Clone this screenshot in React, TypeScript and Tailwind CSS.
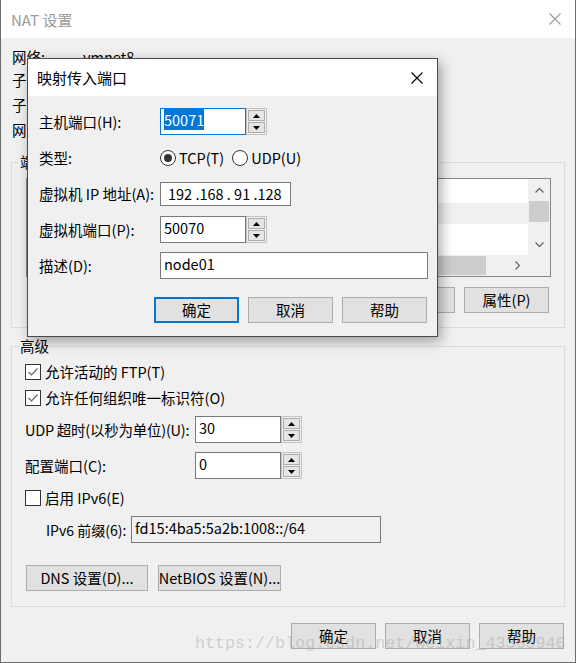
import type { ReactNode } from 'react';

const FONT = "font-['Noto_Sans_CJK_SC','Noto_Sans',sans-serif]";

const CloseIcon = ({ color }: { color: string }) => (
  <svg width="12" height="12" viewBox="0 0 12 12">
    <path d="M0.5 0.5 L11.5 11.5 M11.5 0.5 L0.5 11.5" stroke={color} strokeWidth="1.1" />
  </svg>
);

const Btn = ({ children, primary, w = 'w-[85px]' }: { children: ReactNode; primary?: boolean; w?: string }) => (
  <div
    className={`flex h-[26px] ${w} shrink-0 items-center justify-center bg-[#e1e1e1] text-[14.5px] leading-none text-black ${
      primary ? 'border-2 border-[#0078d7]' : 'border border-[#adadad]'
    }`}
  >
    {children}
  </div>
);

const Tri = ({ down }: { down?: boolean }) => (
  <svg width="7" height="4" viewBox="0 0 7 4">
    <path d={down ? 'M0 0 L7 0 L3.5 4Z' : 'M0 4 L7 4 L3.5 0Z'} fill="#000" />
  </svg>
);

const Spin = () => (
  <div className="flex h-[27px] w-[21px] shrink-0 flex-col gap-[1px] border border-[#c2c2c2] bg-[#f0f0f0] p-[1px]">
    <div className="flex flex-1 items-center justify-center border border-[#adadad] bg-[#e5e5e5]">
      <Tri />
    </div>
    <div className="flex flex-1 items-center justify-center border border-[#adadad] bg-[#e5e5e5]">
      <Tri down />
    </div>
  </div>
);

const Box = ({
  children,
  w,
  focused,
  disabled,
}: {
  children?: ReactNode;
  w: string;
  focused?: boolean;
  disabled?: boolean;
}) => (
  <div
    className={`${w} h-[27px] shrink-0 border pl-[3px] pt-[3px] text-[14.5px] leading-[16px] ${
      focused ? 'border-[#0078d7] bg-white' : disabled ? 'border-[#7a7a7a] bg-[#f0f0f0]' : 'border-[#7a7a7a] bg-white'
    }`}
  >
    {children}
  </div>
);

const Check = ({ checked }: { checked?: boolean }) => (
  <div className="flex h-[16px] w-[16px] shrink-0 items-center justify-center border border-[#333] bg-white">
    {checked && (
      <svg width="14" height="14" viewBox="0 0 14 14">
        <path d="M2.5 7 L5.5 10 L11.5 3.5" stroke="#666" strokeWidth="1.2" fill="none" />
      </svg>
    )}
  </div>
);

const Radio = ({ checked }: { checked?: boolean }) => (
  <div className="flex h-[16px] w-[16px] shrink-0 items-center justify-center rounded-full border border-[#333] bg-white">
    {checked && <div className="h-[8px] w-[8px] rounded-full bg-[#333]" />}
  </div>
);

const Chevron = ({ dir }: { dir: 'up' | 'down' | 'right' }) => {
  if (dir === 'right')
    return (
      <svg width="5" height="9" viewBox="0 0 5 9">
        <path d="M0.5 0.5 L4.5 4.5 L0.5 8.5" stroke="#606060" strokeWidth="1.2" fill="none" />
      </svg>
    );
  return (
    <svg width="9" height="5" viewBox="0 0 9 5">
      <path
        d={dir === 'up' ? 'M0.5 4.5 L4.5 0.5 L8.5 4.5' : 'M0.5 0.5 L4.5 4.5 L8.5 0.5'}
        stroke="#606060"
        strokeWidth="1.2"
        fill="none"
      />
    </svg>
  );
};

const ListBox = () => (
  <div className="flex h-[99px] w-[525px] flex-col border border-[#828790] bg-white">
    <div className="flex flex-1">
      <div className="flex flex-1 flex-col">
        <div className="h-[24px]" />
        <div className="h-[21px] bg-[#f0f0f0]" />
      </div>
      <div className="flex w-[22px] flex-col bg-[#f0f0f0]">
        <div className="flex h-[22px] items-center justify-center">
          <Chevron dir="up" />
        </div>
        <div className="mx-[1px] h-[21px] bg-[#cdcdcd]" />
        <div className="flex-1" />
        <div className="flex h-[22px] items-center justify-center">
          <Chevron dir="down" />
        </div>
      </div>
    </div>
    <div className="flex h-[21px] bg-[#f0f0f0]">
      <div className="w-[22px]" />
      <div className="my-[1px] w-[437px] bg-[#cdcdcd]" />
      <div className="flex-1" />
      <div className="flex w-[22px] items-center justify-center">
        <Chevron dir="right" />
      </div>
      <div className="w-[22px] bg-[#f0f0f0]" />
    </div>
  </div>
);

const MapPortDialog = () => (
  <div className="absolute left-[26px] top-[58px] flex h-[279px] w-[411px] flex-col border border-[#4a4a4a] bg-[#f0f0f0] shadow-[3px_4px_12px_rgba(0,0,0,0.35)]">
    <div className="flex h-[37px] items-center justify-between bg-white pl-[9px] pr-[14px]">
      <span className="text-[15px] leading-none">映射传入端口</span>
      <CloseIcon color="#000" />
    </div>
    <div className="flex flex-col pl-[11px] pt-[12px]">
      <div className="flex h-[27px] items-center">
        <span className="w-[121px] shrink-0">主机端口(H):</span>
        <Box w="w-[86px]" focused>
          <span className="bg-[#0078d7] text-white">50071</span>
        </Box>
        <Spin />
      </div>
      <div className="mt-[10px] flex h-[26px] items-center">
        <span className="w-[121px] shrink-0">类型:</span>
        <Radio checked />
        <span className="ml-[3px] mr-[8px]">TCP(T)</span>
        <Radio />
        <span className="ml-[3px]">UDP(U)</span>
      </div>
      <div className="mt-[11px] flex h-[24px] items-center">
        <span className="w-[121px] shrink-0">虚拟机 IP 地址(A):</span>
        <div className="flex h-[24px] w-[131px] shrink-0 items-center border border-[#7a7a7a] bg-white pl-[7px] text-[14.5px] leading-none">
          192 .168 . 91 .128
        </div>
      </div>
      <div className="mt-[10px] flex h-[27px] items-center">
        <span className="w-[121px] shrink-0">虚拟机端口(P):</span>
        <Box w="w-[86px]">50070</Box>
        <Spin />
      </div>
      <div className="mt-[9px] flex h-[27px] items-center">
        <span className="w-[121px] shrink-0">描述(D):</span>
        <Box w="w-[268px]">node01</Box>
      </div>
      <div className="mt-[18px] flex justify-end gap-[9px] pr-[10px]">
        <Btn primary>确定</Btn>
        <Btn>取消</Btn>
        <Btn>帮助</Btn>
      </div>
    </div>
  </div>
);

export default function App() {
  return (
    <div
      className={`relative h-[663px] w-[576px] overflow-hidden whitespace-nowrap border-x border-b border-[#6d6d6d] bg-[#f0f0f0] text-[14.5px] leading-[20px] text-black ${FONT}`}
    >
      <div className="flex h-[38px] items-center justify-between bg-white pl-[10px] pr-[14px]">
        <span className="text-[15px] leading-none text-[#9a9a9a]">NAT 设置</span>
        <CloseIcon color="#9a9a9a" />
      </div>

      <div className="pl-[11px] pt-[8px]">
        <div className="flex h-[22px] items-center">
          <span className="w-[71px] shrink-0">网络:</span>
          <span>vmnet8</span>
        </div>
        <div className="flex h-[24px] items-center">
          <span className="w-[120px] shrink-0">子网 IP:</span>
          <span>192.168.91.0</span>
        </div>
        <div className="flex h-[25px] items-center">
          <span className="w-[120px] shrink-0">子网掩码:</span>
          <span>255.255.255.0</span>
        </div>
        <div className="flex h-[26px] items-center">
          <span className="w-[120px] shrink-0">网关 IP(G):</span>
          <span>192.168.91.2</span>
        </div>
      </div>

      <fieldset className="ml-[10px] mt-[8px] w-[554px] border border-[#dcdcdc] pb-[14px]">
        <legend className="ml-[7px] px-[1px] leading-[22px]">端口转发(F)</legend>
        <div className="flex flex-col pl-[14px] pt-[5px]">
          <ListBox />
          <div className="mt-[10px] flex w-[523px] justify-end gap-[9px]">
            <Btn>添加(A)...</Btn>
            <Btn>移除(R)</Btn>
            <Btn>属性(P)</Btn>
          </div>
        </div>
      </fieldset>

      <fieldset className="ml-[10px] mt-[7px] w-[554px] border border-[#dcdcdc] pb-[15px]">
        <legend className="ml-[7px] px-[1px] leading-[22px]">高级</legend>
        <div className="flex flex-col pl-[13px] pt-[2px]">
          <div className="flex h-[26px] items-center gap-[4px]">
            <Check checked />
            <span>允许活动的 FTP(T)</span>
          </div>
          <div className="flex h-[26px] items-center gap-[4px]">
            <Check checked />
            <span>允许任何组织唯一标识符(O)</span>
          </div>
          <div className="mt-[5px] flex h-[27px] items-center">
            <span className="w-[170px] shrink-0 tracking-[-0.25px]">UDP 超时(以秒为单位)(U):</span>
            <Box w="w-[86px]">30</Box>
            <Spin />
          </div>
          <div className="mt-[9px] flex h-[27px] items-center">
            <span className="w-[170px] shrink-0">配置端口(C):</span>
            <Box w="w-[86px]">0</Box>
            <Spin />
          </div>
          <div className="mt-[6px] flex h-[26px] items-center gap-[4px]">
            <Check />
            <span>启用 IPv6(E)</span>
          </div>
          <div className="mt-[5px] flex h-[27px] items-center pl-[21px]">
            <span className="w-[85px] shrink-0 text-[14px]">IPv6 前缀(6):</span>
            <Box w="w-[250px]" disabled>
              fd15:4ba5:5a2b:1008::/64
            </Box>
          </div>
          <div className="mt-[22px] flex gap-[10px] pl-[1px]">
            <Btn w="w-[122px]">DNS 设置(D)...</Btn>
            <Btn w="w-[123px]">NetBIOS 设置(N)...</Btn>
          </div>
        </div>
      </fieldset>

      <div className="mt-[16px] flex justify-end gap-[9px] pr-[11px]">
        <Btn>确定</Btn>
        <Btn>取消</Btn>
        <Btn>帮助</Btn>
      </div>

      <div className="pointer-events-none absolute left-[194px] top-[634px] font-['Liberation_Mono',monospace] text-[16.7px] leading-[20px] text-[#999]/40">
        https://blog.csdn.net/weixin_43305946
      </div>

      <MapPortDialog />
    </div>
  );
}
